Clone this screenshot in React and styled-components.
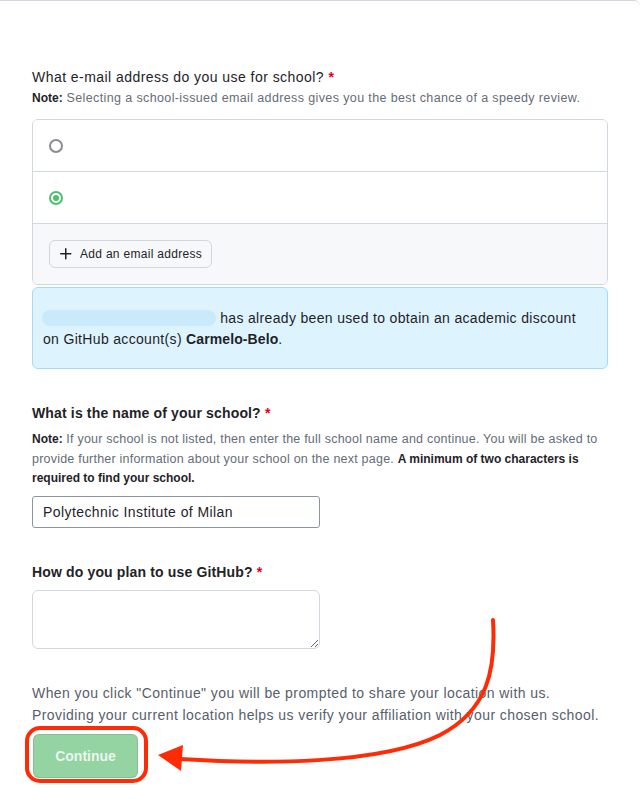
import React from "react";
import styled, { createGlobalStyle } from "styled-components";

const Global = createGlobalStyle`
  html, body { margin: 0; padding: 0; background: #ffffff; }
  body {
    font-family: "Liberation Sans", Arial, sans-serif;
    color: #1f2328;
    -webkit-font-smoothing: antialiased;
  }
  * { box-sizing: border-box; }
`;

const Page = styled.div`
  position: relative;
  width: 640px;
  min-height: 808px;
  border-top: 1px solid #d0d7de;
  border-top-right-radius: 6px;
  padding: 66px 32px 0;
`;

const Section = styled.section`
  margin-top: ${(p) => p.$mt || 0}px;
`;

const Label = styled.div`
  font-size: 14px;
  line-height: 20px;
  font-weight: ${(p) => (p.$bold ? 700 : 400)};
  letter-spacing: ${(p) => (p.$bold ? "0.15px" : "0.45px")};
  color: #1f2328;
`;

const Req = styled.span`
  color: #e0001b;
  font-weight: 700;
`;

const Note = styled.p`
  margin: ${(p) => p.$m || "2px 0 0"};
  font-size: 12.5px;
  letter-spacing: ${(p) => p.$ls || 0.3}px;
  line-height: ${(p) => p.$lh || 18}px;
  color: #656d76;
  white-space: nowrap;
  b { color: #1f2328; font-weight: 700; font-size: 12px; letter-spacing: 0; }
`;

const EmailBox = styled.div`
  margin-top: 12px;
  border: 1px solid #d0d7de;
  border-radius: 6px;
  overflow: hidden;
`;

const EmailRow = styled.div`
  height: 52px;
  display: flex;
  align-items: center;
  padding-left: 16px;
  border-bottom: 1px solid #d0d7de;
  background: #ffffff;
`;

const RadioDot = styled.span`
  width: 14px;
  height: 14px;
  border-radius: 50%;
  display: inline-flex;
  align-items: center;
  justify-content: center;
  border: 2px solid ${(p) => (p.$checked ? "#4ac26b" : "#8b8b95")};
  background: #ffffff;
  &::after {
    content: "";
    display: ${(p) => (p.$checked ? "block" : "none")};
    width: 6px;
    height: 6px;
    border-radius: 50%;
    background: #4ac26b;
  }
`;

const BoxFooter = styled.div`
  background: #f6f8fa;
  padding: 16px;
  height: 60px;
`;

const SmallButton = styled.button`
  display: inline-flex;
  align-items: center;
  gap: 6px;
  height: 28px;
  padding: 0 9px 0 8px;
  font-family: inherit;
  font-size: 12px;
  letter-spacing: 0.3px;
  font-weight: 500;
  color: #1f2328;
  background: #f6f8fa;
  border: 1px solid #d0d7de;
  border-radius: 6px;
  cursor: pointer;
`;

const Flash = styled.div`
  margin-top: 2px;
  background: #ddf4ff;
  border: 1px solid #a6d8fa;
  border-radius: 6px;
  padding: 20px 10px 18px;
  font-size: 14px;
  letter-spacing: 0.33px;
  line-height: 21px;
  color: #1f2328;
  b { font-weight: 700; letter-spacing: 0.1px; }
`;

const Redacted = styled.span`
  display: inline-block;
  width: 174px;
  height: 16px;
  margin-left: -1px;
  vertical-align: -3px;
  border-radius: 8px;
  background: #c8eafb;
`;

const TextInput = styled.input`
  display: block;
  margin-top: 7px;
  width: 288px;
  height: 32px;
  padding: 0 10px;
  font-family: inherit;
  font-size: 14px;
  letter-spacing: 0.42px;
  color: #1f2328;
  border: 1px solid #8c959f;
  border-radius: 3px;
  background: #ffffff;
  outline: none;
`;

const TextArea = styled.textarea`
  display: block;
  margin-top: 8px;
  width: 288px;
  height: 59px;
  padding: 6px 10px;
  font-family: inherit;
  font-size: 14px;
  border: 1px solid #d0d7de;
  border-radius: 6px;
  background: #ffffff;
  outline: none;
`;

const Info = styled.p`
  margin: 33px 0 0;
  font-size: 14px;
  letter-spacing: 0.42px;
  line-height: 22px;
  color: #57606a;
  white-space: nowrap;
`;

const PrimaryButton = styled.button`
  display: block;
  margin-top: 8px;
  margin-left: 1px;
  width: 105px;
  height: 44px;
  font-family: inherit;
  font-size: 14px;
  font-weight: 700;
  color: rgba(255, 255, 255, 0.82);
  background: #94d3a2;
  border: 1px solid rgba(31, 35, 40, 0.12);
  border-radius: 6px;
  cursor: not-allowed;
`;

const Annotation = styled.svg`
  position: absolute;
  left: 0;
  top: -1px;
  width: 640px;
  height: 808px;
  pointer-events: none;
  overflow: visible;
`;

export default function App() {
  return (
    <>
      <Global />
      <Page>
        <Section>
          <Label>
            What e-mail address do you use for school? <Req>*</Req>
          </Label>
          <Note $ls={0.38}>
            <b>Note:</b> Selecting a school-issued email address gives you the best chance of a speedy review.
          </Note>
          <EmailBox>
            <EmailRow>
              <RadioDot />
            </EmailRow>
            <EmailRow>
              <RadioDot $checked />
            </EmailRow>
            <BoxFooter>
              <SmallButton type="button">
                <svg width="16" height="16" viewBox="0 0 16 16" fill="#1f2328">
                  <path d="M7.75 2a.75.75 0 0 1 .75.75V7h4.25a.75.75 0 0 1 0 1.5H8.5v4.25a.75.75 0 0 1-1.5 0V8.5H2.75a.75.75 0 0 1 0-1.5H7V2.75A.75.75 0 0 1 7.75 2Z" />
                </svg>
                Add an email address
              </SmallButton>
            </BoxFooter>
          </EmailBox>
          <Flash>
            <Redacted /> has already been used to obtain an academic discount
            <br />
            on GitHub account(s) <b>Carmelo-Belo</b>.
          </Flash>
        </Section>

        <Section $mt={34}>
          <Label $bold>
            What is the name of your school? <Req>*</Req>
          </Label>
          <Note $m="7px 0 0" $lh={19.5} $ls={0.22}>
            <b>Note:</b> If your school is not listed, then enter the full school name and continue. You will be asked to
            <br />
            provide further information about your school on the next page. <b>A minimum of two characters is</b>
            <br />
            <b>required to find your school.</b>
          </Note>
          <TextInput defaultValue="Polytechnic Institute of Milan" />
        </Section>

        <Section $mt={34}>
          <Label $bold>
            How do you plan to use GitHub? <Req>*</Req>
          </Label>
          <TextArea />
        </Section>

        <Info>
          When you click "Continue" you will be prompted to share your location with us.
          <br />
          Providing your current location helps us verify your affiliation with your chosen school.
        </Info>
        <PrimaryButton type="button">Continue</PrimaryButton>

        <Annotation viewBox="0 0 640 808">
          <rect x="27" y="728" width="119" height="53" rx="13" ry="13" fill="none" stroke="#ff2b06" strokeWidth="4" />
          <path
            d="M 493 620 C 496 670, 488 710, 440 735 C 380 765, 260 764, 180 759"
            fill="none"
            stroke="#ff2b06"
            strokeWidth="4"
            strokeLinecap="round"
          />
          <polygon points="158,755 183,745 181,771" fill="#ff2b06" />
        </Annotation>
      </Page>
    </>
  );
}
